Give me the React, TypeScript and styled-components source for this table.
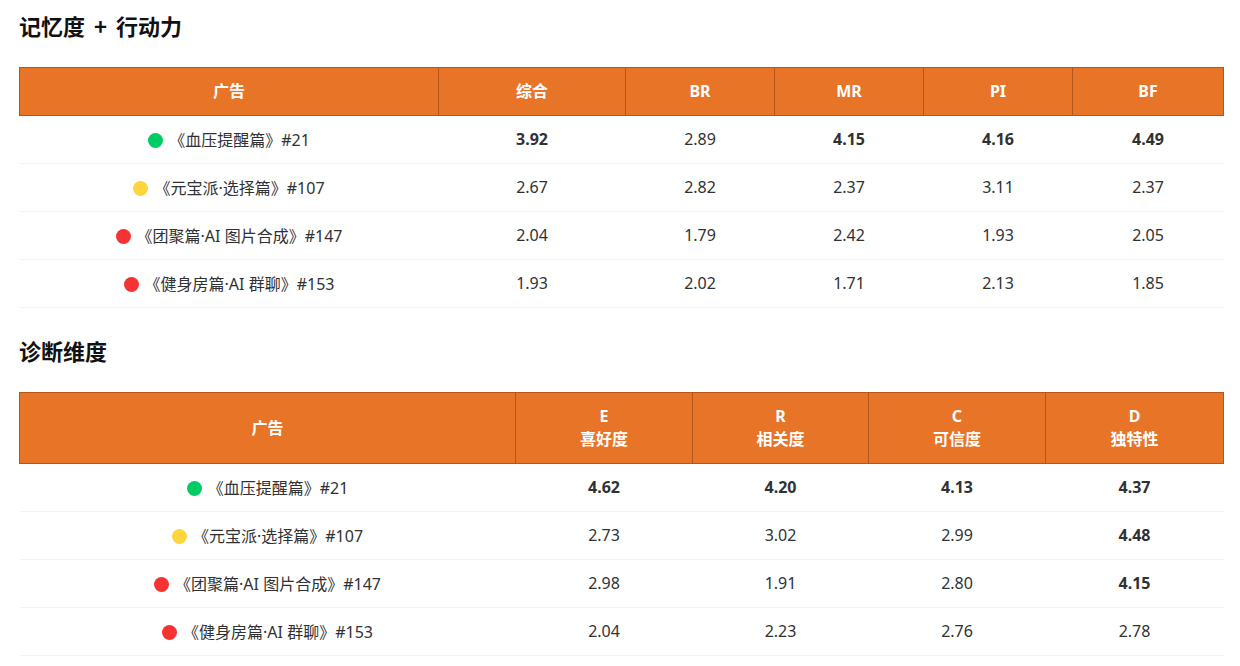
import React from "react";
import styled, { createGlobalStyle } from "styled-components";

const Global = createGlobalStyle`
  *, *::before, *::after { box-sizing: border-box; }
  html, body { margin: 0; padding: 0; background: #ffffff; }
  body { font-family: "Noto Sans", "Noto Sans CJK SC", sans-serif; color: #303133; }
`;

const Page = styled.div`
  padding: 12px 17px 0 19px;
  display: flex;
  flex-direction: column;
  gap: 29px;
`;

const Section = styled.section`
  display: flex;
  flex-direction: column;
  gap: 29px;
`;

const Title = styled.h2`
  margin: 0;
  font-size: 22px;
  line-height: 26px;
  font-weight: 700;
  color: #111;
  word-spacing: 4px;
  font-family: "Noto Sans CJK SC", "Noto Sans", sans-serif;
`;

const Table = styled.table`
  width: 1204px;
  border-collapse: collapse;
  table-layout: fixed;
`;

const Th = styled.th<{ $w: number }>`
  width: ${(p) => p.$w}px;
  background: #e87428;
  color: #ffffff;
  border: 1px solid #b3561b;
  padding: 12px 8px;
  font-size: 16px;
  line-height: 23px;
  font-weight: 700;
  text-align: center;
  font-family: "Noto Sans", "Noto Sans CJK SC", sans-serif;
`;

const Tr = styled.tr`
  height: 48px;
  border-bottom: 1px solid #edf6f6;
`;

const Td = styled.td<{ $bold?: boolean }>`
  padding: 0 8px;
  font-size: 16px;
  line-height: 23px;
  text-align: center;
  color: #303133;
  font-weight: ${(p) => (p.$bold ? 700 : 400)};
`;

const AdName = styled.span`
  display: inline-flex;
  align-items: center;
  gap: 6px;
  line-height: 23px;
  vertical-align: middle;
`;

const Dot = styled.span<{ $c: string }>`
  width: 15px;
  height: 15px;
  border-radius: 50%;
  background: ${(p) => p.$c};
  flex: none;
`;

const GREEN = "#00cc66";
const YELLOW = "#ffd53d";
const RED = "#f53333";

type Row = { dot: string; name: string; vals: [string, boolean][] };

const t1Cols = [
  { w: 419, label: ["广告"] },
  { w: 187, label: ["综合"] },
  { w: 149, label: ["BR"] },
  { w: 149, label: ["MR"] },
  { w: 149, label: ["PI"] },
  { w: 151, label: ["BF"] },
];

const t1Rows: Row[] = [
  { dot: GREEN, name: "《血压提醒篇》#21", vals: [["3.92", true], ["2.89", false], ["4.15", true], ["4.16", true], ["4.49", true]] },
  { dot: YELLOW, name: "《元宝派·选择篇》#107", vals: [["2.67", false], ["2.82", false], ["2.37", false], ["3.11", false], ["2.37", false]] },
  { dot: RED, name: "《团聚篇·AI 图片合成》#147", vals: [["2.04", false], ["1.79", false], ["2.42", false], ["1.93", false], ["2.05", false]] },
  { dot: RED, name: "《健身房篇·AI 群聊》#153", vals: [["1.93", false], ["2.02", false], ["1.71", false], ["2.13", false], ["1.85", false]] },
];

const t2Cols = [
  { w: 496, label: ["广告"] },
  { w: 177, label: ["E", "喜好度"] },
  { w: 176, label: ["R", "相关度"] },
  { w: 177, label: ["C", "可信度"] },
  { w: 178, label: ["D", "独特性"] },
];

const t2Rows: Row[] = [
  { dot: GREEN, name: "《血压提醒篇》#21", vals: [["4.62", true], ["4.20", true], ["4.13", true], ["4.37", true]] },
  { dot: YELLOW, name: "《元宝派·选择篇》#107", vals: [["2.73", false], ["3.02", false], ["2.99", false], ["4.48", true]] },
  { dot: RED, name: "《团聚篇·AI 图片合成》#147", vals: [["2.98", false], ["1.91", false], ["2.80", false], ["4.15", true]] },
  { dot: RED, name: "《健身房篇·AI 群聊》#153", vals: [["2.04", false], ["2.23", false], ["2.76", false], ["2.78", false]] },
];

function ScoreTable({ cols, rows }: { cols: { w: number; label: string[] }[]; rows: Row[] }) {
  return (
    <Table>
      <thead>
        <tr>
          {cols.map((c, i) => (
            <Th key={i} $w={c.w}>
              {c.label.map((l, j) => (
                <React.Fragment key={j}>
                  {j > 0 && <br />}
                  {l}
                </React.Fragment>
              ))}
            </Th>
          ))}
        </tr>
      </thead>
      <tbody>
        {rows.map((r, i) => (
          <Tr key={i}>
            <Td>
              <AdName>
                <Dot $c={r.dot} />
                {r.name}
              </AdName>
            </Td>
            {r.vals.map(([v, b], j) => (
              <Td key={j} $bold={b}>
                {v}
              </Td>
            ))}
          </Tr>
        ))}
      </tbody>
    </Table>
  );
}

export default function App() {
  return (
    <>
      <Global />
      <Page>
        <Section>
          <Title>记忆度 + 行动力</Title>
          <ScoreTable cols={t1Cols} rows={t1Rows} />
        </Section>
        <Section>
          <Title>诊断维度</Title>
          <ScoreTable cols={t2Cols} rows={t2Rows} />
        </Section>
      </Page>
    </>
  );
}
